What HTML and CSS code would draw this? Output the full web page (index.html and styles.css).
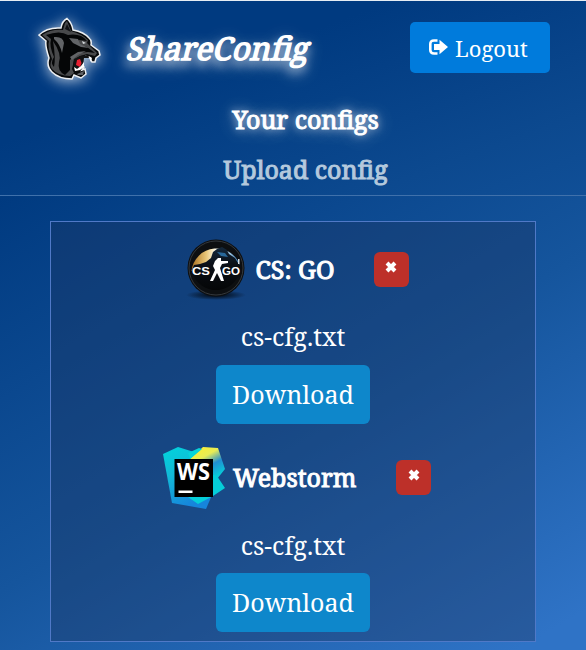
FILE: index.html
```html
<!DOCTYPE html>
<html lang="en">
<head>
<meta charset="utf-8">
<title>ShareConfig</title>
<link rel="stylesheet" href="styles.css">
</head>
<body>
<header class="header">
  <div class="topbar">
    <svg class="panther" viewBox="0 0 64 66">
      <path d="M1 18Q9 10 23 11Q24 4 29 1.5Q34 6 35 13Q46 15 51 21Q54 23 53 28L61 34L62 38L58 41L57 45L54 45L52 41L48 39L43 42L42 45L46 50L44 53L47 52L48 57L43 61L36 58L34 62Q21 62 14 55Q8 49 11 41Q7 29 8 24Z" fill="#08090a" stroke="#eceff2" stroke-width="1.5"/>
      <path d="M4 18Q13 12 25 13L27 6L29 4L33 14Q44 17 50 23L49 26L59 36L57 39L49 37L42 39L36 43L34 52L36 56L32 59Q20 59 14 52Q11 48 14 42Q9 30 11 24Z" fill="#48494b"/>
      <path d="M8 18Q22 13 30 18Q43 16 49 24L41 23L36 26L49 30L57 36L50 35L39 36L32 43L32 53L27 58Q19 54 21 45Q24 37 15 24Q18 42 16 50Q12 46 16 40Q11 29 13 22Z" fill="#050607"/>
      <path d="M27 12L29 7L33 15Z" fill="#111214"/>
      <path d="M16 20Q25 19 26 26L24 36Q22 27 16 22ZM31 21L40 22L42 27L51 31L43 30L35 26ZM32 40L40 35L48 34L40 38L34 43Z" fill="#626467"/>
      <path d="M44 24L48 26L45 27Z" fill="#d5dadd"/>
      <path d="M36 42L42 39L50 38L51 41L46 41L45 49L38 53L35 49Z" fill="#111213"/>
      <path d="M39 43L42 42L43.5 46L42 50L38 48Z" fill="#e82032"/>
      <path d="M51 39L52.5 45L54 41ZM43 49L46 45L46 50L42 53L37 54L36 50L39 52Z" fill="#fff"/>
      <path d="M36 54L39 57L46 54L45 58L40 58Z" fill="#606266"/>
    </svg>
    <h1 class="brand">ShareConfig</h1>
    <button class="logout"><svg viewBox="0 0 20 16"><path d="M9.5 1.5H6Q2.3 1.5 2.3 5V11Q2.3 14.5 6 14.5H9.5" fill="none" stroke="#fff" stroke-width="2.6"/><path d="M6 5H11.5V.8L20 8L11.5 15.2V11H6Z" fill="#fff"/></svg><span>Logout</span></button>
  </div>
  <nav class="nav">
    <a class="active">Your configs</a>
    <a>Upload config</a>
  </nav>
</header>
<main class="content">
<div class="panel">
  <section class="config">
    <div class="title">
      <svg class="csgo" viewBox="0 0 62 62">
        <defs>
          <linearGradient id="sky"><stop offset="0" stop-color="#a86f20"/><stop offset=".3" stop-color="#e8c678"/><stop offset=".5" stop-color="#fffdf0"/><stop offset=".7" stop-color="#d4edfb"/><stop offset="1" stop-color="#1763a7"/></linearGradient>
          <linearGradient id="low" x2="0" y2="1"><stop offset="0" stop-color="#14283c"/><stop offset=".4" stop-color="#0b1017"/><stop offset="1" stop-color="#050607"/></linearGradient>
          <radialGradient id="shade"><stop offset="0" stop-color="#000" stop-opacity=".95"/><stop offset="1" stop-color="#000" stop-opacity="0"/></radialGradient>
        </defs>
        <ellipse cx="30" cy="57" rx="30" ry="5" fill="url(#shade)"/>
        <circle cx="30" cy="30" r="28.5" fill="#0d0f11"/>
        <circle cx="30" cy="30" r="27" fill="none" stroke="#34383c"/>
        <path d="M5.5 33A25 25 0 0 1 54.5 29L30 33Z" fill="url(#sky)"/>
        <path d="M6 32L8 27L14 26L20 24L25 20L27 14L31 11L36 9L41 12L43 16L49 20L52 25L55 28A25 25 0 0 1 6 34Z" fill="url(#low)"/>
        <path d="M31 14L39 15L42 19L35 18Z" fill="#28689a"/>
        <path d="M32 20L35 20L35 23L42 23V25L36 26L34 30L38 43H35L31 35L27 43H24L29 32L27 28L29 23Z" fill="#fff"/>
        <path d="M52 21H53.5V26H52Z" fill="#d9e0e5"/>
        <g class="cs-label"><text x="6" y="37" textLength="18" lengthAdjust="spacingAndGlyphs">CS</text><text x="36" y="37" textLength="18" lengthAdjust="spacingAndGlyphs">GO</text></g>
      </svg>
      <h2>CS: GO</h2>
      <button class="remove" aria-label="Remove"><svg viewBox="0 0 12 12"><path d="M2 2L10 10M10 2L2 10"/></svg></button>
    </div>
    <p>cs-cfg.txt</p>
    <button class="download">Download</button>
  </section>
  <section class="config">
    <div class="title webstorm">
      <svg class="ws" viewBox="0 0 62 62">
        <defs>
          <linearGradient id="left" x2=".4" y2="1"><stop offset="0" stop-color="#00d4dc"/><stop offset=".45" stop-color="#12bad8"/><stop offset="1" stop-color="#1685dc"/></linearGradient>
          <linearGradient id="right" x2=".6" y2="1"><stop offset=".15" stop-color="#f8ee39"/><stop offset=".4" stop-color="#e8ed55"/><stop offset=".68" stop-color="#218fd3"/><stop offset="1" stop-color="#08c9d8"/></linearGradient>
        </defs>
        <path d="M0 7L15 0L31 5L49 48L43 62L9 56Z" fill="url(#left)"/>
        <path d="M27 12L40 0L55 1L62 22L54 32L46 22Z" fill="url(#right)"/>
        <path d="M50 27L54 29L62 41L50 49L35 57L25 50L50 50Z" fill="#05ced9"/>
        <path d="M25 6L36 1L39 2L27 12Z" fill="#05d4d9"/>
        <path d="M11.5 12H50V50H11.5Z"/>
        <text class="ws-label" x="14" y="33" textLength="33" lengthAdjust="spacingAndGlyphs">WS</text>
        <path d="M15.5 43.5H29.5V46H15.5Z" fill="#fff"/>
      </svg>
      <h2>Webstorm</h2>
      <button class="remove" aria-label="Remove"><svg viewBox="0 0 12 12"><path d="M2 2L10 10M10 2L2 10"/></svg></button>
    </div>
    <p>cs-cfg.txt</p>
    <button class="download">Download</button>
  </section>
</div>
</main>
</body>
</html>
```
FILE: styles.css
```css
* { box-sizing: border-box; }
body {
  margin: 0; height: 650px; overflow: hidden; color: #fff;
  font: 25px/36px "Noto Serif", "DejaVu Serif Condensed", "DejaVu Serif", serif;
}
button { font: inherit; color: #fff; border: 0; padding: 0; }
.header { height: 196px; border-top: 1px solid #e6edf4; border-bottom: 1px solid #4071ab; background: linear-gradient(160deg, #003a80 35%, #0c498f 80%, #104f97 100%); }
.topbar { display: flex; height: 92px; padding: 16px 36px 0 38px; align-items: flex-start; }
.panther { width: 64px; height: 66px; filter: drop-shadow(0 2px 7px #ffffffb8); }
.brand { margin: 13px 0 0 26px; font-size: 31.5px; line-height: 36px; font-weight: 400; -webkit-text-stroke: 1.4px #fff; transform: skewX(-14deg); text-shadow: 0 5px 9px #ffffffc0, 0 5px 16px #ffffffc0; }
.logout { display: flex; width: 140px; height: 51px; margin: 5px 0 0 auto; align-items: center; padding: 0 0 0 18px; gap: 7px; background: #007bdc; border-radius: 5px; font-size: 22px; }
.logout svg { width: 20px; height: 16px; margin-top: -2px; }
.nav { display: flex; flex-direction: column; align-items: center; gap: 14px; padding: 8px 0 0 25px; }
.nav a { color: #b4c9dd; -webkit-text-stroke: 1px currentColor; }
.nav .active { color: #fff; text-shadow: 0 0 9px #ffffffd0, 0 1px 18px #ffffffa0; }
.content { height: 454px; padding: 25px 50px 0; background: linear-gradient(150deg, #003a80 0%, #15559d 50%, #2f73c6 95%); }
.panel { width: 486px; height: 421px; border: 1px solid #5079c7; background: #1e355f61; }
.config { height: 208px; display: flex; flex-direction: column; align-items: center; }
.config + .config { height: 209px; }
.title { width: 223px; height: 80px; padding-top: 16px; display: flex; align-items: flex-start; margin-left: 8px; }
.webstorm { width: 268px; margin-left: 8px; }
.title svg { flex: none; }
.csgo, .ws { width: 62px; height: 62px; }
.ws { margin-top: 1px; }
.title h2 { font-size: 25px; line-height: 36px; font-weight: 400; -webkit-text-stroke: 1px #fff; margin: 13px 0 0 8px; white-space: nowrap; }
.webstorm h2 { margin-left: 8px; }
.remove { width: 35px; height: 35px; margin: 14px 0 0 auto; background: #bd3029; border-radius: 6px; display: flex; justify-content: center; padding-top: 9px; }
.title .remove svg { width: 12px; height: 12px; }
.remove path { stroke: #fff; stroke-width: 4; }
.config p { margin: 16px 0 11px; }
.config + .config p { margin: 17px 0 10px; }
.download { width: 154px; height: 59px; padding-bottom: 2px; background: #0e87cb; border-radius: 6px; flex: none; }
.cs-label { font: bold 10px "Liberation Sans", sans-serif; fill: #fff; }
.ws-label { font: bold 23px "Open Sans", sans-serif; fill: #fff; }
```
